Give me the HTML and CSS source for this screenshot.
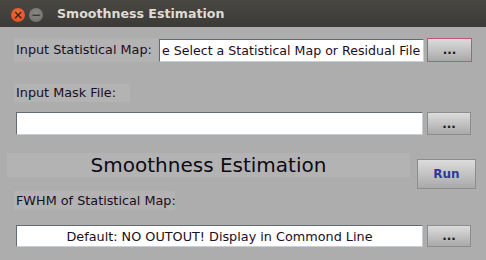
FILE: index.html
```html
<!DOCTYPE html>
<html>
  <head>
    <title>Smoothness Estimation</title>
    <link rel="stylesheet" href="styles.css">
  </head>
  <body>
    <div class="window">
      <div class="titlebar">
        <span class="win-btn close">&times;</span>
        <span class="win-btn minimize">&minus;</span>
        <span class="title">Smoothness Estimation</span>
      </div>

      <div class="content">
        <div class="row first-row">
          <div class="label map-label">Input Statistical Map:</div>
          <div class="field map-field">e Select a Statistical Map or Residual File</div>
          <button class="browse focused">...</button>
        </div>

        <div class="label mask-label">Input Mask File:</div>
        <div class="row field-row">
          <div class="field wide-field"></div>
          <button class="browse">...</button>
        </div>

        <div class="row run-row">
          <div class="heading">Smoothness Estimation</div>
          <button class="run">Run</button>
        </div>

        <div class="label fwhm-label">FWHM of Statistical Map:</div>
        <div class="row field-row output-row">
          <div class="field wide-field centered">Default: NO OUTOUT! Display in Commond Line</div>
          <button class="browse">...</button>
        </div>
      </div>
    </div>
  </body>
</html>
```

FILE: styles.css
```css
body {
  margin: 0;
  background-color: #adadad;
  font-family: "DejaVu Sans", sans-serif;
  font-size: 12.8px;
  color: #1c0e22;
}
.window {
  width: 486px;
  height: 260px;
  overflow: hidden;
}
.titlebar {
  height: 27px;
  display: flex;
  align-items: center;
  padding-left: 11px;
  background: linear-gradient(#4a4843, #3b3a36);
  box-sizing: border-box;
}
.win-btn {
  width: 14px;
  height: 14px;
  border-radius: 50%;
  display: flex;
  align-items: center;
  justify-content: center;
  font-size: 12px;
  font-weight: bold;
  line-height: 1;
  margin-top: 2px;
}
.close {
  background: radial-gradient(circle at 50% 40%, #f2713f, #d9471a);
  color: #4a1c0c;
}
.minimize {
  margin-left: 4px;
  background: radial-gradient(circle at 50% 40%, #8a8985, #6c6b67);
  color: #3c3b38;
}
.title {
  margin-left: 14px;
  color: #dfdbd2;
  font-weight: bold;
  font-size: 12.6px;
}
.content {
  padding: 0 10px 0 14px;
}
.row {
  display: flex;
  align-items: center;
}
.label {
  background-color: #b3b3b3;
  padding-left: 2px;
  box-sizing: border-box;
  white-space: nowrap;
}
.first-row {
  margin-top: 11px;
  height: 24px;
}
.map-label {
  width: 144px;
  height: 24px;
  line-height: 24px;
}
.field {
  background-color: #ffffff;
  border-style: solid;
  border-width: 1px;
  border-color: #646a74 #c6ceda #c6ceda #646a74;
  box-sizing: border-box;
  white-space: nowrap;
  overflow: hidden;
  display: flex;
  align-items: center;
  padding: 0 2px;
}
.map-field {
  margin-left: 1px;
  width: 265px;
  height: 23px;
  font-size: 12.6px;
}
.browse {
  margin-left: 3px;
  width: 45px;
  height: 23px;
  border: 1px solid #8d8d8d;
  background: linear-gradient(#dcdcdc, #a9a9a9);
  font-family: "DejaVu Sans", sans-serif;
  font-size: 12px;
  font-weight: bold;
  color: #1a1a1a;
  padding: 0;
  box-sizing: border-box;
}
.focused {
  height: 24px;
  border-color: #c0567e;
}
.mask-label {
  margin-top: 22px;
  width: 116px;
  height: 18px;
  line-height: 18px;
}
.field-row {
  margin-top: 10px;
  padding-left: 2px;
}
.wide-field {
  width: 407px;
  height: 23px;
}
.field-row .browse {
  margin-left: 4px;
  width: 44px;
}
.run-row {
  margin-top: 18px;
  margin-left: -7px;
  height: 36px;
  align-items: flex-start;
}
.heading {
  width: 403px;
  height: 24px;
  line-height: 24px;
  background-color: #b3b3b3;
  text-align: center;
  font-size: 20px;
  color: #0e0a14;
}
.run {
  margin-left: 7px;
  margin-top: 6px;
  width: 59px;
  height: 30px;
  border: 1px solid #8d8d8d;
  background: linear-gradient(#dcdcdc, #a9a9a9);
  font-family: "DejaVu Sans", sans-serif;
  font-size: 12px;
  font-weight: bold;
  color: #2b3c98;
  padding: 0;
}
.fwhm-label {
  margin-top: 2px;
  width: 161px;
  height: 19px;
  line-height: 19px;
}
.output-row {
  margin-top: 15px;
}
.output-row .wide-field,
.output-row .browse {
  height: 22px;
}
.centered {
  justify-content: center;
}
```
